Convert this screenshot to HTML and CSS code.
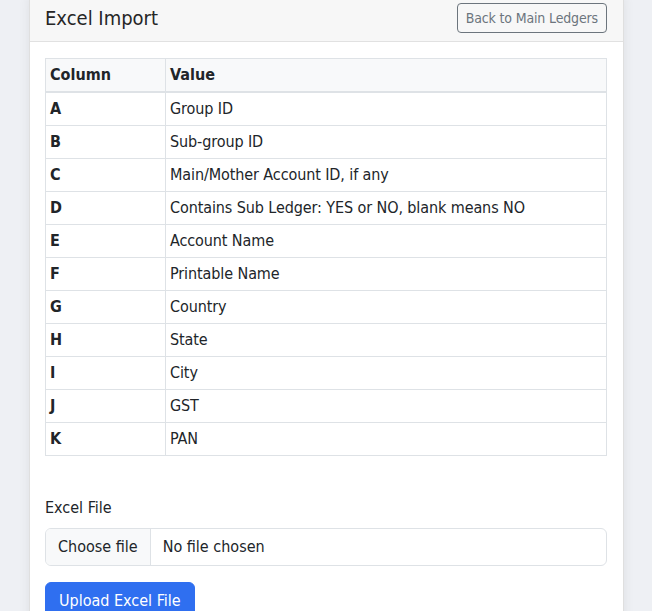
FILE: index.html
```html
<!DOCTYPE html>
<html>
<head>
<meta charset="utf-8">
<link rel="stylesheet" href="styles.css">
</head>
<body>
<div class="page">
  <div class="card">
    <div class="card-header">
      <h5 class="title">Excel Import</h5>
      <a class="btn-back">Back to Main Ledgers</a>
    </div>
    <div class="card-body">
      <table class="cols">
        <thead>
          <tr><th class="c1">Column</th><th>Value</th></tr>
        </thead>
        <tbody>
          <tr><th>A</th><td>Group ID</td></tr>
          <tr><th>B</th><td>Sub-group ID</td></tr>
          <tr><th>C</th><td>Main/Mother Account ID, if any</td></tr>
          <tr><th>D</th><td>Contains Sub Ledger: YES or NO, blank means NO</td></tr>
          <tr><th>E</th><td>Account Name</td></tr>
          <tr><th>F</th><td>Printable Name</td></tr>
          <tr><th>G</th><td>Country</td></tr>
          <tr><th>H</th><td>State</td></tr>
          <tr><th>I</th><td>City</td></tr>
          <tr><th>J</th><td>GST</td></tr>
          <tr><th>K</th><td>PAN</td></tr>
        </tbody>
      </table>
      <form class="upload">
        <label class="label">Excel File</label>
        <div class="file">
          <span class="file-btn">Choose file</span>
          <span class="file-name">No file chosen</span>
        </div>
        <button type="button" class="btn-primary">Upload Excel File</button>
      </form>
    </div>
  </div>
</div>
</body>
</html>
```
FILE: styles.css
```css
* { box-sizing: border-box; }
html, body { margin: 0; padding: 0; }
body {
  background: #eef0f4;
  font-family: "DejaVu Sans Condensed", "DejaVu Sans", sans-serif;
  font-size: 16px;
  line-height: 1.5;
  color: #212529;
  overflow: hidden;
}
.page {
  padding: 0 29px 0 29px;
  margin-top: -6px;
}
.card {
  width: 595px;
  background: #fff;
  border: 1px solid rgba(0,0,0,0.125);
  border-radius: 6px;
  box-shadow: 0 0 12px rgba(0,0,0,0.07);
}
.card-header {
  display: flex;
  justify-content: space-between;
  align-items: center;
  padding: 8px 16px 8px 15px;
  background: #f7f7f7;
  border-bottom: 1px solid #e1e1e1;
}
.title {
  margin: 0;
  font-size: 20px;
  font-weight: 400;
  line-height: 1.2;
  color: #262626;
}
.btn-back {
  display: inline-block;
  padding: 4px 8px;
  font-size: 14px;
  line-height: 20px;
  letter-spacing: -0.15px;
  color: #6c757d;
  border: 1px solid #6c757d;
  border-radius: 4px;
}
.card-body {
  padding: 16px 16px 16px 15px;
}
.cols {
  width: 100%;
  border-collapse: collapse;
}
.cols th, .cols td {
  border: 1px solid #dee2e6;
  padding: 4px 4px;
  text-align: left;
  line-height: 24px;
}
.cols td { letter-spacing: -0.1px; }
.cols th { font-weight: 700; }
.cols thead th { background: #f8f9fa; border-bottom: 2px solid #dee2e6; }
.cols .c1 { width: 120px; }
.upload {
  padding-top: 40px;
}
.label {
  display: block;
  margin-bottom: 8px;
}
.file {
  display: flex;
  height: 38px;
  border: 1px solid #dee2e6;
  border-radius: 6px;
  overflow: hidden;
}
.file-btn {
  padding: 6px 12px;
  background: #f8f9fa;
  border-right: 1px solid #dee2e6;
}
.file-name {
  padding: 6px 12px;
}
.btn-primary {
  margin-top: 16px;
  font: inherit;
  color: #fff;
  background: #2f6ff0;
  border: 1px solid #2f6ff0;
  border-radius: 6px;
  padding: 6px 13px;
  line-height: 24px;
}
```
